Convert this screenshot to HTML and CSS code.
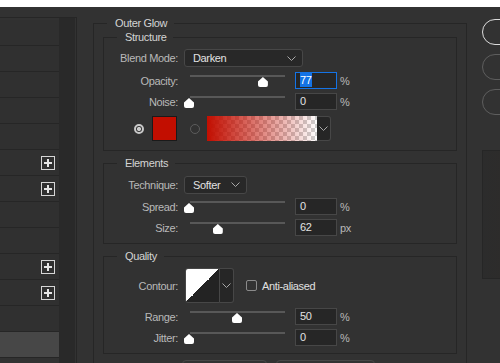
FILE: index.html
```html
<!DOCTYPE html>
<html lang="en">
<head>
    <meta charset="UTF-8">
    <title>Layer Style - Outer Glow</title>
    <link rel="stylesheet" href="styles.css">
</head>
<body>
    <div class="topbar"></div>
    <div class="dialog">
        <div class="styles-panel">
            <div class="style-list">
                <div class="style-row"></div>
                <div class="style-row"></div>
                <div class="style-row"></div>
                <div class="style-row"></div>
                <div class="style-row"></div>
                <div class="style-row"><span class="plus"></span></div>
                <div class="style-row"><span class="plus"></span></div>
                <div class="style-row"></div>
                <div class="style-row"></div>
                <div class="style-row"><span class="plus"></span></div>
                <div class="style-row"><span class="plus"></span></div>
                <div class="style-row"></div>
                <div class="style-row selected"></div>
            </div>
            <div class="list-scroll"></div>
        </div>

        <fieldset class="outer">
            <legend>Outer Glow</legend>

            <fieldset class="group structure">
                <legend>Structure</legend>
                <div class="row blend">
                    <label>Blend Mode:</label>
                    <div class="dropdown wide">
                        <span>Darken</span>
                        <svg width="9" height="5" viewBox="0 0 9 5"><path d="M0.5 0.5 L4.5 4.5 L8.5 0.5" fill="none" stroke="#a8a8a8"/></svg>
                    </div>
                </div>
                <div class="row">
                    <label>Opacity:</label>
                    <div class="slider"><div class="thumb" style="--v: 77"></div></div>
                    <div class="num focus"><span class="sel">77</span></div>
                    <span class="unit">%</span>
                </div>
                <div class="row noise">
                    <label>Noise:</label>
                    <div class="slider"><div class="thumb" style="--v: 0"></div></div>
                    <div class="num">0</div>
                    <span class="unit">%</span>
                </div>
                <div class="row colors">
                    <span class="radio on"></span>
                    <span class="swatch"></span>
                    <span class="radio"></span>
                    <div class="gradient-pick">
                        <span class="gradient"></span>
                        <span class="drop">
                            <svg width="9" height="5" viewBox="0 0 9 5"><path d="M0.5 0.5 L4.5 4.5 L8.5 0.5" fill="none" stroke="#a8a8a8"/></svg>
                        </span>
                    </div>
                </div>
            </fieldset>

            <fieldset class="group elements">
                <legend>Elements</legend>
                <div class="row technique">
                    <label>Technique:</label>
                    <div class="dropdown short">
                        <span>Softer</span>
                        <svg width="9" height="5" viewBox="0 0 9 5"><path d="M0.5 0.5 L4.5 4.5 L8.5 0.5" fill="none" stroke="#a8a8a8"/></svg>
                    </div>
                </div>
                <div class="row">
                    <label>Spread:</label>
                    <div class="slider"><div class="thumb" style="--v: 0"></div></div>
                    <div class="num">0</div>
                    <span class="unit">%</span>
                </div>
                <div class="row size">
                    <label>Size:</label>
                    <div class="slider"><div class="thumb" style="--v: 30"></div></div>
                    <div class="num">62</div>
                    <span class="unit">px</span>
                </div>
            </fieldset>

            <fieldset class="group quality">
                <legend>Quality</legend>
                <div class="row contour-row">
                    <label>Contour:</label>
                    <div class="contour">
                        <span class="curve"></span>
                        <span class="drop">
                            <svg width="9" height="5" viewBox="0 0 9 5"><path d="M0.5 0.5 L4.5 4.5 L8.5 0.5" fill="none" stroke="#a8a8a8"/></svg>
                        </span>
                    </div>
                    <span class="check"></span>
                    <span class="check-label">Anti-aliased</span>
                </div>
                <div class="row range">
                    <label>Range:</label>
                    <div class="slider"><div class="thumb" style="--v: 50"></div></div>
                    <div class="num">50</div>
                    <span class="unit">%</span>
                </div>
                <div class="row jitter">
                    <label>Jitter:</label>
                    <div class="slider"><div class="thumb" style="--v: 0"></div></div>
                    <div class="num">0</div>
                    <span class="unit">%</span>
                </div>
            </fieldset>

            <div class="bottom-buttons">
                <span class="bbtn first"></span>
                <span class="bbtn second"></span>
            </div>
        </fieldset>

        <div class="side">
            <span class="pill default"></span>
            <span class="pill"></span>
            <span class="pill"></span>
            <div class="preview"></div>
        </div>
    </div>
</body>
</html>
```
FILE: styles.css
```css
/* Layer Style dialog */
body {
    margin: 0;
    background: #323232;
    font-family: 'Liberation Sans', Arial, sans-serif;
    font-size: 11px;
    line-height: 14px;
    letter-spacing: -0.35px;
    color: #b9b9b9;
    overflow: hidden;
}

.topbar {
    height: 7px;
    background: #ffffff;
}

.dialog {
    display: flex;
    height: 356px;
    background: #323232;
    overflow: hidden;
}

/* left styles list */
.styles-panel {
    width: 76px;
    margin-top: 10px;
    padding-top: 2px;
    border-top: 1px solid #262626;
    border-right: 1px solid #262626;
    display: flex;
    flex-shrink: 0;
}

.style-list {
    width: 59px;
}

.style-row {
    height: 25px;
    border-bottom: 1px solid #262626;
    background: #303030;
    display: flex;
    align-items: center;
    justify-content: flex-end;
    padding-right: 4px;
    box-sizing: content-box;
}

.style-row.selected {
    background: #474747;
}

.plus {
    width: 12px;
    height: 12px;
    border: 1px solid #d6d6d6;
    position: relative;
}

.plus::before,
.plus::after {
    content: '';
    position: absolute;
    background: #e6e6e6;
}

.plus::before {
    left: 2px;
    top: 5px;
    width: 8px;
    height: 2px;
}

.plus::after {
    left: 5px;
    top: 2px;
    width: 2px;
    height: 8px;
}

.list-scroll {
    width: 16px;
    background: #292929;
    margin-top: -2px;
}

/* main fieldsets */
fieldset {
    margin: 0;
    min-width: 0;
}

legend {
    color: #d4d4d4;
    line-height: 14px;
}

.outer {
    width: 354px;
    margin: 9px 0 0 16px;
    padding: 0 9px 0 9px;
    border: 1px solid #262626;
    border-bottom: none;
    flex-shrink: 0;
}

.outer > legend {
    margin-left: 4px;
    padding: 0 7px 0 8px;
}

.group {
    border: 1px solid #262626;
    padding: 0 0 7px 0;
}

.group > legend {
    margin-left: 13px;
    padding: 0 7px 0 8px;
}

.structure {
    padding-bottom: 9px;
}

.elements,
.quality {
    margin-top: 5px;
}

.row {
    display: flex;
    align-items: center;
    height: 17px;
    margin-top: 4px;
}

.row label {
    width: 74px;
    text-align: right;
    margin-right: 6px;
    flex-shrink: 0;
}

.blend {
    height: 18px;
    margin-top: 5px;
}

.structure .row:nth-of-type(2) {
    margin-top: 5px;
}

.technique {
    margin-top: 6px;
}

.elements .row:nth-of-type(2) {
    margin-top: 5px;
}

.dropdown {
    height: 16px;
    border: 1px solid #474747;
    border-radius: 3px;
    background: #282828;
    color: #e2e2e2;
    display: flex;
    align-items: center;
    justify-content: space-between;
    padding: 0 6px 0 8px;
}

.dropdown.wide {
    width: 103px;
}

.dropdown.short {
    width: 47px;
}

/* sliders */
.slider {
    position: relative;
    width: 106px;
    height: 17px;
    margin-right: 5px;
}

.slider::before {
    content: '';
    position: absolute;
    left: 6px;
    top: 3px;
    width: 95px;
    height: 2px;
    background: #585858;
}

.thumb {
    position: absolute;
    top: 5px;
    left: calc(var(--v) * 0.96px);
    width: 10px;
    height: 10px;
    background: #ffffff;
    clip-path: polygon(50% 0, 100% 45%, 100% 100%, 0 100%, 0 45%);
    border-radius: 2px;
}

.num {
    width: 36px;
    height: 15px;
    border: 1px solid #474747;
    background: #262626;
    color: #e2e2e2;
    padding-left: 4px;
    line-height: 15px;
}

.num.focus {
    border-color: #1473e6;
}

.sel {
    background: #1473e6;
    color: #ffffff;
    padding: 1px 0;
}

.unit {
    margin-left: 3px;
    color: #b9b9b9;
}

/* color row */
.colors {
    height: 25px;
    margin-top: 6px;
    padding-left: 30px;
}

.radio {
    width: 8px;
    height: 8px;
    border-radius: 50%;
    border: 1px solid #5c5c5c;
    margin-right: 8px;
}

.radio.on {
    border: 2px solid #c9c9c9;
    width: 6px;
    height: 6px;
    background: radial-gradient(circle, #c9c9c9 0 2px, #323232 2.2px);
}

.swatch {
    width: 23px;
    height: 23px;
    background: #c20e00;
    border: 1px solid #1a1a1a;
    margin: 0 13px 0 0;
}

.colors .radio:not(.on) {
    margin-right: 7px;
}

.gradient-pick {
    display: flex;
    height: 25px;
}

.gradient {
    width: 110px;
    height: 25px;
    background:
        linear-gradient(to right, #c20e00, rgba(194, 14, 0, 0)),
        conic-gradient(#cfcfcf 25%, #ffffff 0 50%, #cfcfcf 0 75%, #ffffff 0) 0 0 / 8px 8px;
}

.drop {
    width: 13px;
    display: flex;
    align-items: center;
    justify-content: center;
    background: #262626;
    border: 1px solid #474747;
    border-left: none;
    border-radius: 0 3px 3px 0;
}

/* quality */
.contour-row {
    height: 35px;
    margin-top: 5px;
}

.contour {
    display: flex;
    height: 35px;
    margin-left: 1px;
}

.curve {
    width: 33px;
    height: 33px;
    border: 1px solid #474747;
    border-radius: 3px 0 0 3px;
    background: linear-gradient(to top left, #232323 50%, #ffffff 50%);
}

.check {
    width: 9px;
    height: 9px;
    border: 1px solid #8a8a8a;
    border-radius: 2px;
    margin-left: 12px;
}

.check-label {
    margin-left: 5px;
    color: #e0e0e0;
}

.range {
    margin-top: 5px;
}

/* bottom buttons peeking */
.bottom-buttons {
    display: flex;
    gap: 9px;
    margin: 6px 0 0 79px;
}

.bbtn {
    height: 10px;
    border: 1px solid #474747;
    border-radius: 4px;
}

.bbtn.first {
    width: 83px;
}

.bbtn.second {
    width: 97px;
}

/* right column */
.side {
    margin: 12px 0 0 15px;
    display: flex;
    flex-direction: column;
    gap: 9px;
}

.pill {
    width: 60px;
    height: 24px;
    border: 1px solid #5e5e5e;
    border-radius: 13px;
}

.pill.default {
    border-color: #dcdcdc;
}

.preview {
    width: 60px;
    height: 127px;
    margin-top: 26px;
    border: 1px solid #262626;
    background: linear-gradient(to right, #2c2c2c, #2f2b28);
}
```
